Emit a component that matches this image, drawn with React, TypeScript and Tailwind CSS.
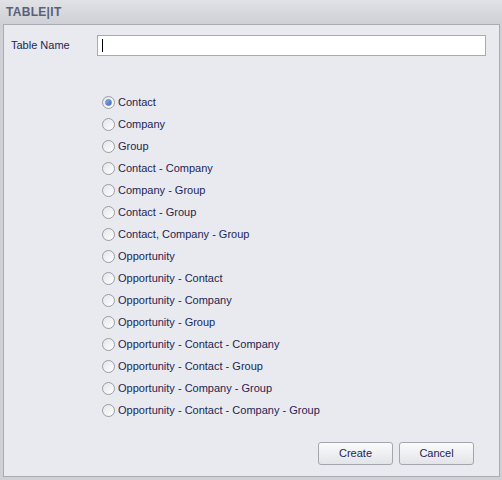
import React, { useState } from 'react';

const options = [
  'Contact',
  'Company',
  'Group',
  'Contact - Company',
  'Company - Group',
  'Contact - Group',
  'Contact, Company - Group',
  'Opportunity',
  'Opportunity - Contact',
  'Opportunity - Company',
  'Opportunity - Group',
  'Opportunity - Contact - Company',
  'Opportunity - Contact - Group',
  'Opportunity - Company - Group',
  'Opportunity - Contact - Company - Group',
];

const Radio = ({ checked }: { checked: boolean }) => (
  <span className="w-[13px] h-[13px] rounded-full border border-[#9a9ca6] bg-gradient-to-br from-[#e4e5ea] to-[#ffffff] flex items-center justify-center shrink-0">
    {checked && (
      <span className="w-[7px] h-[7px] rounded-full bg-gradient-to-br from-[#8fb0e8] to-[#3a68bf] border border-[#5c7fc4]" />
    )}
  </span>
);

const App = () => {
  const [selected, setSelected] = useState(0);
  const [name, setName] = useState('');

  return (
    <div className="w-[502px] h-[480px] bg-[#cfd0d6] flex flex-col font-['Liberation_Sans',Arial,sans-serif] text-[11px] text-[#1e2552]">
      <div className="h-[24px] shrink-0 flex items-center px-[6px] bg-gradient-to-b from-[#e1e2e6] to-[#cfd0d5]">
        <span className="font-bold text-[12px] text-[#596079] tracking-[0.3px]">TABLE|IT</span>
      </div>

      <div className="ml-[3px] w-[497px] h-[453px] border border-[#a9abb5] bg-[#e9eaef] flex flex-col">
        <div className="flex items-center pt-[10px]">
          <span className="ml-[7px] w-[86px]">Table Name</span>
          <div className="relative">
            <input
              value={name}
              onChange={e => setName(e.target.value)}
              className="w-[389px] h-[21px] border border-[#a8abb4] bg-white px-[4px] outline-none text-[11px] block"
            />
            {name === '' && (
              <span className="absolute left-[5px] top-[4px] w-[1px] h-[13px] bg-black pointer-events-none" />
            )}
          </div>
        </div>

        <div className="flex flex-col mt-[35px] pl-[98px]">
          {options.map((opt, i) => (
            <label
              key={opt}
              className="h-[22px] flex items-center gap-[3px] cursor-default"
              onClick={() => setSelected(i)}
            >
              <Radio checked={selected === i} />
              <span>{opt}</span>
            </label>
          ))}
        </div>

        <div className="flex justify-end gap-[6px] pr-[25px] mt-[21px]">
          <button className="w-[75px] h-[23px] rounded-[3px] border border-[#a3a6ae] bg-gradient-to-b from-[#fbfbfc] to-[#e3e4e8] text-[11px] text-[#1e2552]">
            Create
          </button>
          <button className="w-[75px] h-[23px] rounded-[3px] border border-[#a3a6ae] bg-gradient-to-b from-[#fbfbfc] to-[#e3e4e8] text-[11px] text-[#1e2552]">
            Cancel
          </button>
        </div>
      </div>
    </div>
  );
};

export default App;
